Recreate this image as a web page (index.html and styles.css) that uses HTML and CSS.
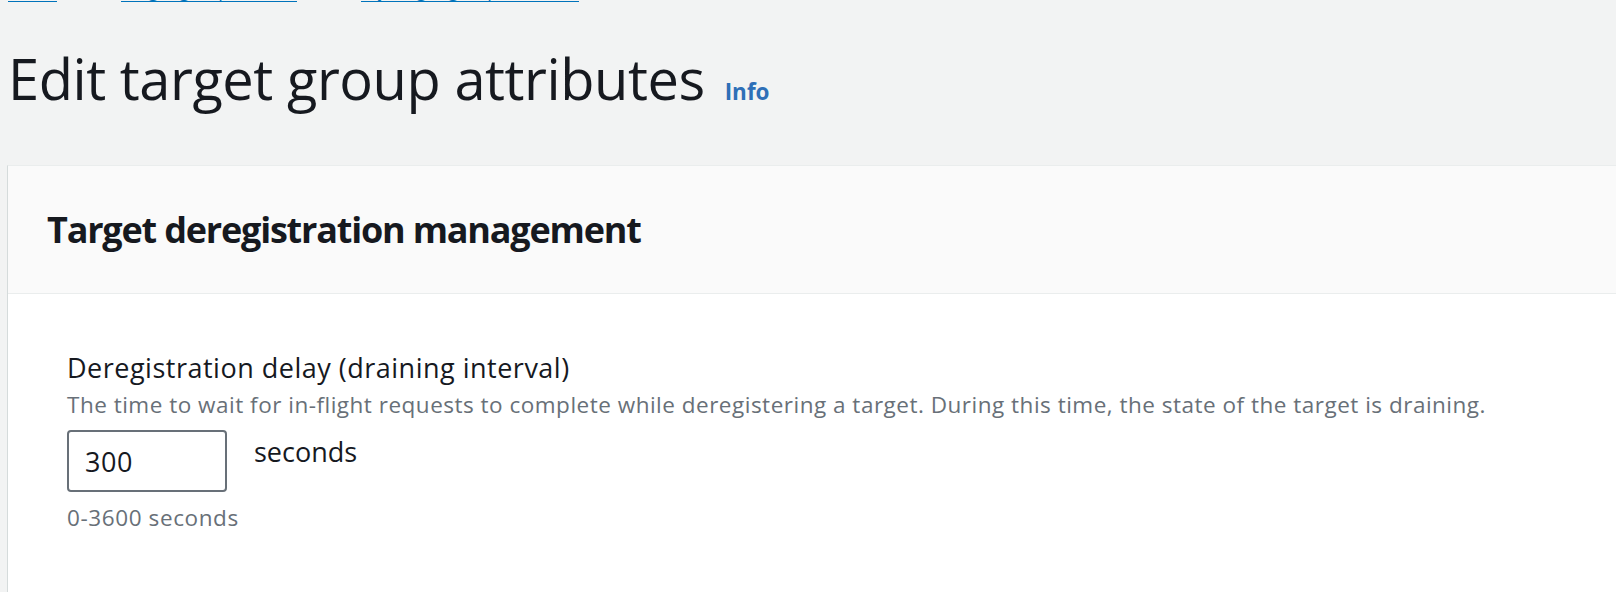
FILE: index.html
```html
<!DOCTYPE html>
<html lang="en">
<head>
<meta charset="utf-8">
<title>Edit target group attributes</title>
<link rel="stylesheet" href="styles.css">
</head>
<body>
<nav class="breadcrumbs">
  <a class="crumb crumb-1" href="#">EC2</a>
  <span class="sep">&rsaquo;</span>
  <a class="crumb crumb-2" href="#">Target groups</a>
  <span class="sep">&rsaquo;</span>
  <a class="crumb crumb-3" href="#">my-target-group</a>
</nav>
<header class="page-header">
  <h1 class="page-title">Edit target group attributes</h1>
  <a class="info-link" href="#">Info</a>
</header>
<section class="panel">
  <div class="panel-header">
    <h2 class="panel-title">Target deregistration management</h2>
  </div>
  <div class="panel-body">
    <div class="field">
      <label class="field-label" for="delay">Deregistration delay (draining interval)</label>
      <p class="field-desc">The time to wait for in-flight requests to complete while deregistering a target. During this time, the state of the target is draining.</p>
      <div class="input-row">
        <input class="text-input" id="delay" type="text" value="300">
        <span class="unit">seconds</span>
      </div>
      <p class="field-constraint">0-3600 seconds</p>
    </div>
  </div>
</section>
</body>
</html>
```

FILE: styles.css
```css
* { box-sizing: border-box; }
html, body { margin: 0; padding: 0; }
body {
  background: #f2f3f3;
  font-family: "Open Sans", "Noto Sans", sans-serif;
  color: #16191f;
  height: 592px;
  overflow: hidden;
}
.breadcrumbs {
  display: flex;
  align-items: flex-end;
  height: 24px;
  margin-top: -22px;
  padding-left: 8px;
  font-size: 18px;
  line-height: 22px;
}
.crumb {
  display: inline-block;
  color: #0073bb;
  text-decoration: none;
  border-bottom: 1px solid #0073bb;
  white-space: nowrap;
  overflow: hidden;
}
.crumb-1 { width: 49px; }
.crumb-2 { width: 176px; }
.crumb-3 { width: 218px; }
.sep { width: 64px; text-align: center; color: #687078; }
.page-header {
  display: flex;
  align-items: baseline;
  padding: 43px 0 53px 8px;
}
.page-title {
  margin: 0;
  font-size: 56px;
  line-height: 67px;
  font-weight: 500;
  letter-spacing: -0.45px;
}
.info-link {
  margin-left: 20px;
  font-size: 22.5px;
  font-weight: 700;
  color: #2e6fb7;
  text-decoration: none;
}
.panel {
  margin-left: 7px;
  background: #ffffff;
  border-left: 1px solid #d5dbdb;
  border-top: 1px solid #eaeded;
  height: 430px;
}
.panel-header {
  background: #fafafa;
  height: 128px;
  border-bottom: 1px solid #eaeded;
  display: flex;
  align-items: center;
  padding: 0 39px;
}
.panel-title {
  margin: 0;
  font-size: 36px;
  font-weight: 700;
  line-height: 44px;
  letter-spacing: -1.2px;
}
.panel-body {
  padding: 56px 59px 0;
}
.field-label {
  display: block;
  font-size: 27px;
  line-height: 35px;
  letter-spacing: 0.5px;
}
.field-desc {
  margin: 6px 0 0;
  font-size: 22.5px;
  line-height: 28px;
  letter-spacing: 0.5px;
  color: #687078;
}
.input-row {
  display: flex;
  align-items: flex-start;
  gap: 27px;
  margin-top: 11px;
}
.text-input {
  width: 160px;
  height: 62px;
  border: 2px solid #687078;
  border-radius: 4px;
  padding: 0 16px;
  font-family: inherit;
  font-size: 27px;
  letter-spacing: 0.6px;
  color: #16191f;
  background: #ffffff;
  outline: none;
}
.unit {
  margin-top: 4px;
  font-size: 27px;
  line-height: 35px;
}
.field-constraint {
  margin: 12px 0 0;
  font-size: 22.5px;
  line-height: 28px;
  letter-spacing: 0.6px;
  color: #687078;
}
```
